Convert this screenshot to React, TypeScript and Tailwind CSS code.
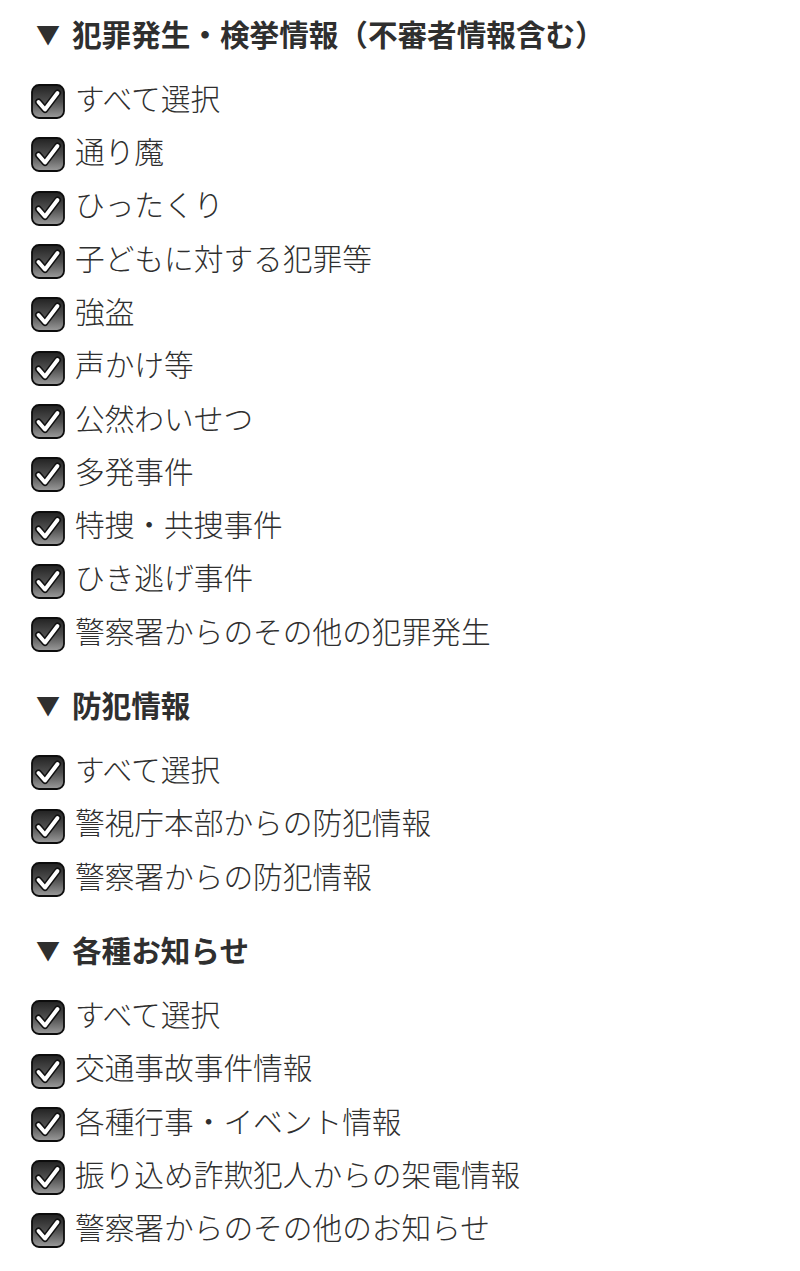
import React from 'react';

type Section = {
  title: string;
  items: string[];
};

const sections: Section[] = [
  {
    title: '犯罪発生・検挙情報（不審者情報含む）',
    items: [
      'すべて選択',
      '通り魔',
      'ひったくり',
      '子どもに対する犯罪等',
      '強盗',
      '声かけ等',
      '公然わいせつ',
      '多発事件',
      '特捜・共捜事件',
      'ひき逃げ事件',
      '警察署からのその他の犯罪発生',
    ],
  },
  {
    title: '防犯情報',
    items: ['すべて選択', '警視庁本部からの防犯情報', '警察署からの防犯情報'],
  },
  {
    title: '各種お知らせ',
    items: [
      'すべて選択',
      '交通事故事件情報',
      '各種行事・イベント情報',
      '振り込め詐欺犯人からの架電情報',
      '警察署からのその他のお知らせ',
    ],
  },
];

function CheckBox() {
  return (
    <svg width="34" height="35" viewBox="0 0 34 35" className="mt-[8px] shrink-0">
      <defs>
        <linearGradient id="cbg" x1="0" y1="0" x2="0" y2="1">
          <stop offset="0" stopColor="#222" />
          <stop offset="0.5" stopColor="#4e4e4e" />
          <stop offset="1" stopColor="#9c9c9c" />
        </linearGradient>
      </defs>
      <rect x="1" y="1" width="32" height="33" rx="7" fill="url(#cbg)" stroke="#0d0d0d" strokeWidth="1.8" />
      <path
        d="M7.5 18 L14 25.5 L26.5 9"
        fill="none"
        stroke="#111"
        strokeWidth="7"
        strokeLinecap="round"
        strokeLinejoin="round"
      />
      <path
        d="M7.5 18 L14 25.5 L26.5 9"
        fill="none"
        stroke="#fff"
        strokeWidth="3.8"
        strokeLinecap="round"
        strokeLinejoin="round"
      />
    </svg>
  );
}

export default function App() {
  return (
    <div
      className="min-h-[1271px] bg-white pt-3 pl-[31px] text-[#2f2f2f]"
      style={{ fontFamily: '"Noto Sans CJK JP", "Noto Sans", sans-serif' }}
    >
      {sections.map((section, i) => (
        <div key={section.title} className={i > 0 ? 'mt-[26px]' : ''}>
          <h2 className="flex h-[44px] items-center text-[29.6px] font-bold leading-none">
            <span className="ml-[5px] mr-3 text-[24px]">▼</span>
            {section.title}
          </h2>
          <ul className="mt-[15px]">
            {section.items.map((item) => (
              <li key={item} className="flex h-[53.3px] items-center gap-[10px]">
                <CheckBox />
                <span className="text-[29.7px] font-light leading-none">{item}</span>
              </li>
            ))}
          </ul>
        </div>
      ))}
    </div>
  );
}
